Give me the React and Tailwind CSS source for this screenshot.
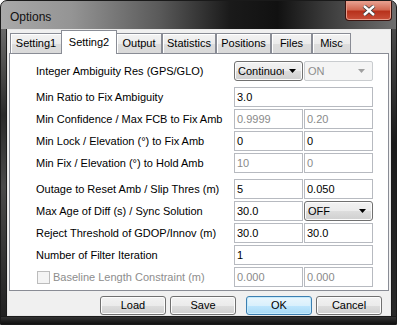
import React from "react"

const font = "font-['Liberation_Sans',Arial,sans-serif]"

function Tab({ label, width, selected }) {
  if (selected) {
    return (
      <div
        className="relative z-10 -mx-px mb-[-1px] flex h-[24px] items-start justify-center border border-b-0 border-[#898c95] bg-white pt-[3px] text-[11px] text-black"
        style={{ width }}
      >
        {label}
      </div>
    )
  }
  return (
    <div
      className="flex h-[20px] items-center justify-center border border-b-0 border-[#898c95] bg-[linear-gradient(#f3f3f3,#ebebeb_50%,#dddddd_51%,#d9d9d9)] text-[11px] text-black shadow-[inset_1px_1px_0_#fff]"
      style={{ width }}
    >
      {label}
    </div>
  )
}

function Field({ value, disabled, wide }) {
  return (
    <div
      className={
        "flex h-[20px] items-center border border-[#b7bac0] bg-white px-[2px] text-[11px] " +
        (wide ? "w-[139px] " : "w-[69px] ") +
        (disabled ? "text-[#8a8a8a]" : "text-black")
      }
    >
      {value}
    </div>
  )
}

function Arrow({ color = "#000" }) {
  return (
    <svg width="7" height="4" viewBox="0 0 7 4">
      <path d="M0 0h7L3.5 4z" fill={color} />
    </svg>
  )
}

function Combo({ value, disabled }) {
  if (disabled) {
    return (
      <div className="flex h-[20px] w-[69px] items-center justify-between rounded-[2px] border border-[#c9cccf] bg-[#f4f4f4] pl-[3px] pr-[7px] text-[11px] text-[#8d8d8d]">
        <span>{value}</span>
        <Arrow color="#a0a0a0" />
      </div>
    )
  }
  return (
    <div className="flex h-[20px] w-[69px] items-center justify-between overflow-hidden rounded-[3px] border border-[#707070] bg-[linear-gradient(#f2f2f2,#ebebeb_50%,#dddddd_51%,#cfcfcf)] pl-[3px] pr-[6px] text-[11px] text-black shadow-[inset_0_0_0_1px_#fcfcfc]">
      <span className="w-[46px] overflow-hidden whitespace-nowrap">{value}</span>
      <Arrow />
    </div>
  )
}

function Row({ label, children, className = "" }) {
  return (
    <div className={"flex h-[20px] items-center pl-[26px] " + className}>
      <div className="w-[198px] whitespace-nowrap text-[11px] text-black">{label}</div>
      <div className="flex gap-px">{children}</div>
    </div>
  )
}

function Button({ children, primary, className = "" }) {
  return (
    <div
      className={
        "flex h-[19px] w-[66px] items-center justify-center rounded-[3px] border text-[11px] text-black " +
        (primary
          ? "border-[#3c7fb1] bg-[linear-gradient(#eaf6fd,#d9f0fc_50%,#bee6fd_51%,#a7d9f5)] shadow-[inset_0_0_0_1px_#c5eafc] "
          : "border-[#707070] bg-[linear-gradient(#f2f2f2,#ebebeb_50%,#dddddd_51%,#cfcfcf)] shadow-[inset_0_0_0_1px_#fcfcfc] ") +
        className
      }
    >
      {children}
    </div>
  )
}

export default function App() {
  const tabs = [
    ["Setting1", 52],
    ["Setting2", 56, true],
    ["Output", 46],
    ["Statistics", 54],
    ["Positions", 55],
    ["Files", 41],
    ["Misc", 39],
  ]
  return (
    <div className={"h-[325px] w-[397px] bg-white " + font}>
      <div className="flex h-full w-full flex-col overflow-hidden rounded-t-[7px] border border-[#1a1a1a] bg-[linear-gradient(90deg,#a9a9a9_0%,#949494_18%,#5a5a5a_40%,#1a1a1a_58%,#111_70%,#3a3a3a_82%,#6e6e6e_100%)]">
        <div className="flex h-[28px] items-start">
          <div className="pl-[9px] pt-[7px] text-[12px] text-[#101010]">Options</div>
          <div className="ml-auto mr-[4px] flex h-[20px] w-[47px] items-center justify-center rounded-b-[4px] border border-t-0 border-[#3a1410] bg-[linear-gradient(#e8a393,#d36a54_45%,#b8321c_55%,#c9503a)] shadow-[inset_0_0_0_1px_#e89c8a]">
            <svg width="14" height="11" viewBox="0 0 14 11">
              <path
                d="M2 1l5 4.5L12 1M2 10l5-4.5L12 10"
                stroke="#3a3a3a"
                strokeWidth="4"
                fill="none"
              />
              <path
                d="M2 1l5 4.5L12 1M2 10l5-4.5L12 10"
                stroke="#fff"
                strokeWidth="2.4"
                fill="none"
              />
            </svg>
          </div>
        </div>
        <div className="flex flex-1">
          <div className="w-[6px] border-r border-[#1b1b1b] bg-[linear-gradient(#6a6a6a,#2a2a2a_30%,#4a4a4a_55%,#222)]" />
          <div className="flex flex-1 flex-col border border-[#e8e8e8] bg-[#f0f0f0]">
            <div className="flex h-[23px] items-end pl-[2px]">
              {tabs.map(([label, width, sel]) => (
                <Tab key={label} label={label} width={width} selected={sel} />
              ))}
            </div>
            <div className="ml-[1px] mr-[1px] flex h-[238px] flex-col border border-[#898c95] bg-white pt-[7px]">
              <Row label="Integer Ambiguity Res (GPS/GLO)">
                <Combo value="Continuous" />
                <Combo value="ON" disabled />
              </Row>
              <Row label="Min Ratio to Fix Ambiguity" className="mt-[6px]">
                <Field value="3.0" wide />
              </Row>
              <Row label="Min Confidence / Max FCB to Fix Amb" className="mt-[2px]">
                <Field value="0.9999" disabled />
                <Field value="0.20" disabled />
              </Row>
              <Row label="Min Lock / Elevation (°) to Fix Amb" className="mt-[2px]">
                <Field value="0" />
                <Field value="0" />
              </Row>
              <Row label="Min Fix / Elevation (°) to Hold Amb" className="mt-[2px]">
                <Field value="10" disabled />
                <Field value="0" disabled />
              </Row>
              <Row label="Outage to Reset Amb / Slip Thres (m)" className="mt-[6px]">
                <Field value="5" />
                <Field value="0.050" />
              </Row>
              <Row label="Max Age of Diff (s) / Sync Solution" className="mt-[2px]">
                <Field value="30.0" />
                <Combo value="OFF" />
              </Row>
              <Row label="Reject Threshold of GDOP/Innov (m)" className="mt-[2px]">
                <Field value="30.0" />
                <Field value="30.0" />
              </Row>
              <Row label="Number of Filter Iteration" className="mt-[2px]">
                <Field value="1" wide />
              </Row>
              <div className="mt-[2px] flex h-[20px] items-center pl-[27px]">
                <div className="flex w-[197px] items-center gap-[3px] text-[11px] text-[#8d8d8d]">
                  <div className="h-[13px] w-[13px] border border-[#bcbcbc] bg-[#f4f4f4]" />
                  <span>Baseline Length Constraint (m)</span>
                </div>
                <div className="flex gap-px">
                  <Field value="0.000" disabled />
                  <Field value="0.000" disabled />
                </div>
              </div>
            </div>
            <div className="flex flex-1 items-start pl-[92px] pt-[5px]">
              <Button>Load</Button>
              <Button className="ml-[4px]">Save</Button>
              <Button primary className="ml-[10px]">OK</Button>
              <Button className="ml-[4px]">Cancel</Button>
            </div>
          </div>
          <div className="w-[5px] border-l border-[#1b1b1b] bg-[linear-gradient(#4a4a4a,#1a1a1a_40%,#2a2a2a)]" />
        </div>
        <div className="h-[8px] border-t border-[#1b1b1b] bg-[linear-gradient(#333,#111)]" />
      </div>
    </div>
  )
}
